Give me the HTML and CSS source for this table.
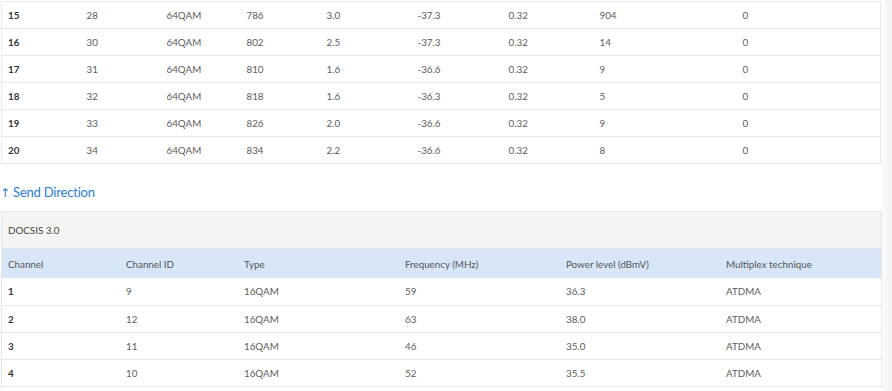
FILE: index.html
```html
<!DOCTYPE html>
<html lang="en">
<head>
<meta charset="utf-8">
<title>Channels</title>
<link rel="stylesheet" href="styles.css">
</head>
<body>
<div class="page">
  <main class="content">
    <table class="grid grid-down">
      <colgroup>
        <col style="width:79px"><col style="width:80px"><col style="width:80px"><col style="width:80px"><col style="width:91px"><col style="width:91px"><col style="width:91px"><col style="width:143px"><col>
      </colgroup>
      <tbody>
        <tr><td class="num">15</td><td>28</td><td>64QAM</td><td>786</td><td>3.0</td><td>-37.3</td><td>0.32</td><td>904</td><td>0</td></tr>
        <tr><td class="num">16</td><td>30</td><td>64QAM</td><td>802</td><td>2.5</td><td>-37.3</td><td>0.32</td><td>14</td><td>0</td></tr>
        <tr><td class="num">17</td><td>31</td><td>64QAM</td><td>810</td><td>1.6</td><td>-36.6</td><td>0.32</td><td>9</td><td>0</td></tr>
        <tr><td class="num">18</td><td>32</td><td>64QAM</td><td>818</td><td>1.6</td><td>-36.3</td><td>0.32</td><td>5</td><td>0</td></tr>
        <tr><td class="num">19</td><td>33</td><td>64QAM</td><td>826</td><td>2.0</td><td>-36.6</td><td>0.32</td><td>9</td><td>0</td></tr>
        <tr><td class="num">20</td><td>34</td><td>64QAM</td><td>834</td><td>2.2</td><td>-36.6</td><td>0.32</td><td>8</td><td>0</td></tr>
      </tbody>
    </table>

    <h2 class="direction"><span class="arrow">↑</span>Send Direction</h2>

    <section class="panel">
      <div class="panel-title">DOCSIS 3.0</div>
      <table class="grid grid-up">
        <colgroup>
          <col style="width:118px"><col style="width:118px"><col style="width:161px"><col style="width:161px"><col style="width:160px"><col>
        </colgroup>
        <thead>
          <tr><th>Channel</th><th>Channel ID</th><th>Type</th><th>Frequency (MHz)</th><th>Power level (dBmV)</th><th>Multiplex technique</th></tr>
        </thead>
        <tbody>
          <tr><td class="num">1</td><td>9</td><td>16QAM</td><td>59</td><td>36.3</td><td>ATDMA</td></tr>
          <tr><td class="num">2</td><td>12</td><td>16QAM</td><td>63</td><td>38.0</td><td>ATDMA</td></tr>
          <tr><td class="num">3</td><td>11</td><td>16QAM</td><td>46</td><td>35.0</td><td>ATDMA</td></tr>
          <tr><td class="num">4</td><td>10</td><td>16QAM</td><td>52</td><td>35.5</td><td>ATDMA</td></tr>
        </tbody>
      </table>
    </section>
  </main>
  <div class="scroll-strip"></div>
</div>
</body>
</html>
```

FILE: styles.css
```css
html, body {
  margin: 0;
  padding: 0;
  background: #ffffff;
}

body {
  font-family: "Lato", "Liberation Sans", sans-serif;
  font-size: 9.8px;
  color: #5c5c5c;
}

.page {
  display: flex;
  height: 391px;
  overflow: hidden;
}

.content {
  flex: 1;
  padding: 1px 0 0 1px;
  min-width: 0;
}

.scroll-strip {
  width: 10px;
  background: linear-gradient(to right, #fbfbfb, #f3f3f3);
}

.grid {
  width: 880px;
  border-collapse: collapse;
  table-layout: fixed;
}

.grid td,
.grid th {
  height: 26px;
  padding: 1px 6px 0;
  text-align: left;
  font-weight: 400;
  white-space: nowrap;
  border-bottom: 1px solid #e8e8e8;
  line-height: 25px;
  box-sizing: border-box;
}

.grid-down {
  border-top: 1px solid #e8e8e8;
  border-left: 1px solid #e8e8e8;
  border-right: 1px solid #e8e8e8;
}

.grid .num {
  color: #333333;
  font-weight: 700;
}

.direction {
  margin: 19px 0 0 -1px;
  height: 28px;
  font-size: 13px;
  letter-spacing: -0.2px;
  font-weight: 400;
  color: #2a7bd6;
  line-height: 19px;
}

.arrow {
  font-family: "DejaVu Sans", sans-serif;
  font-size: 12px;
  letter-spacing: 0;
  margin-right: 3px;
}

.panel {
  width: 881px;
  border: 1px solid #e6e6e6;
  border-bottom: none;
  box-sizing: border-box;
}

.panel-title {
  height: 36px;
  line-height: 37px;
  padding: 0 6px;
  background: #f4f4f2;
  color: #444444;
  border-bottom: 1px solid #e6e6e6;
}

.grid-up {
  width: 879px;
}

.grid-up th {
  height: 29px;
  line-height: 28px;
  background: #d7e7f7;
  color: #555555;
  border-bottom: none;
}

.grid-up td {
  height: 27px;
}
```
